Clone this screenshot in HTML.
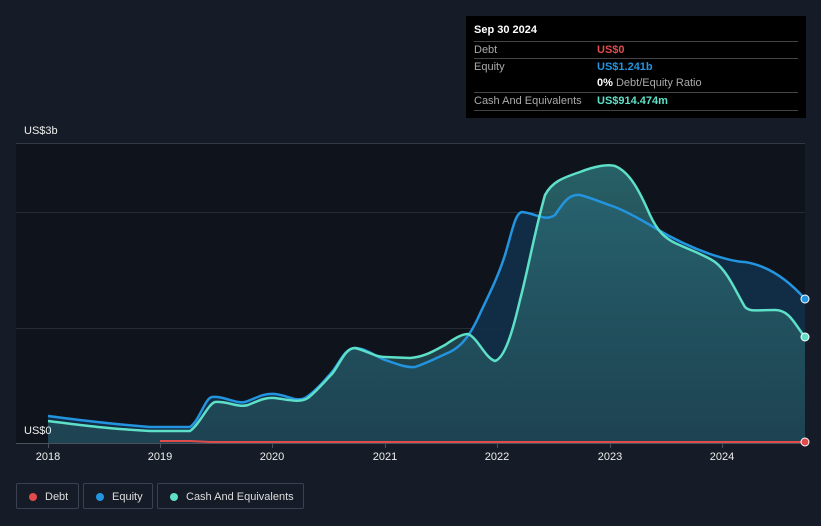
<!DOCTYPE html>
<html><head><style>
body{margin:0;width:821px;height:526px;background:#161c27;font-family:"Liberation Sans",sans-serif;overflow:hidden;position:relative}
.tip{position:absolute;left:466px;top:16px;width:340px;height:102px;background:#000;color:#fff;font-size:11px}
.row{position:absolute;left:8px;width:324px;border-top:1px solid #444;height:17px;line-height:17px}
.row span{position:absolute;left:123px;font-weight:bold}
.lab{color:#aaa}
.leg{position:absolute;top:483px;height:26px;border:1px solid #3a4150;border-radius:2px;color:#ddd;font-size:11px;line-height:26px;box-sizing:border-box;white-space:nowrap}
.leg i{position:absolute;left:12px;top:9px;width:8px;height:8px;border-radius:50%}
.yr{position:absolute;top:451px;color:#eee;font-size:11px;transform:translateX(-50%)}
</style></head><body>
<svg width="821" height="526" style="position:absolute;left:0;top:0">
<defs><linearGradient id="g" x1="0" y1="0" x2="0" y2="1"><stop offset="0" stop-color="#2f7a80" stop-opacity=".75"/><stop offset="1" stop-color="#2a5a60" stop-opacity=".5"/></linearGradient></defs>
<rect x="16" y="143" width="789" height="300" fill="#0f131b"/>
<line x1="16" y1="143.5" x2="805" y2="143.5" stroke="#333a44"/>
<line x1="16" y1="212.5" x2="805" y2="212.5" stroke="#262c36"/>
<line x1="16" y1="328.5" x2="805" y2="328.5" stroke="#262c36"/>
<path d="M48,416 C80,420 100,423 150,427 L190,427 C200,420 205,398 212,397 C225,396 235,404 245,402 C255,399 262,393 275,394 C290,396 295,402 305,398 C315,392 325,380 332,372 C340,362 345,348 355,348 C365,348 375,356 385,360 C395,363 405,368 415,367 C430,362 440,356 450,352 C462,346 470,335 478,318 C487,298 497,280 505,255 C512,232 515,213 522,212 C535,213 545,222 555,215 C565,200 570,194 580,195 C592,198 600,202 615,207 C625,211 640,219 655,228 C670,237 690,247 710,254 C722,258 735,262 745,262 C770,266 790,282 805,299 L805,443 L48,443Z" fill="#12304a" fill-opacity=".9"/>
<path d="M48,421 C80,425 100,428 150,431 L190,431 C200,424 208,404 215,402 C228,401 238,408 248,405 C258,401 265,397 275,398 C290,400 300,403 308,398 C318,390 325,381 332,374 C340,364 345,348 355,348 C365,350 375,357 385,357 L410,358 C425,357 435,350 445,345 C455,338 462,334 468,334 C478,338 485,358 495,361 C505,358 513,330 520,300 C528,270 535,230 545,195 C552,182 562,178 580,172 C595,166 608,164 615,166 C630,172 640,192 650,215 C658,232 665,238 675,243 C690,250 705,255 715,262 C728,272 735,290 745,307 C750,312 755,310 775,310 C790,310 795,325 805,337 L805,443 L48,443Z" fill="url(#g)"/>
<path d="M48,416 C80,420 100,423 150,427 L190,427 C200,420 205,398 212,397 C225,396 235,404 245,402 C255,399 262,393 275,394 C290,396 295,402 305,398 C315,392 325,380 332,372 C340,362 345,348 355,348 C365,348 375,356 385,360 C395,363 405,368 415,367 C430,362 440,356 450,352 C462,346 470,335 478,318 C487,298 497,280 505,255 C512,232 515,213 522,212 C535,213 545,222 555,215 C565,200 570,194 580,195 C592,198 600,202 615,207 C625,211 640,219 655,228 C670,237 690,247 710,254 C722,258 735,262 745,262 C770,266 790,282 805,299" fill="none" stroke="#2394df" stroke-width="2.5"/>
<path d="M48,421 C80,425 100,428 150,431 L190,431 C200,424 208,404 215,402 C228,401 238,408 248,405 C258,401 265,397 275,398 C290,400 300,403 308,398 C318,390 325,381 332,374 C340,364 345,348 355,348 C365,350 375,357 385,357 L410,358 C425,357 435,350 445,345 C455,338 462,334 468,334 C478,338 485,358 495,361 C505,358 513,330 520,300 C528,270 535,230 545,195 C552,182 562,178 580,172 C595,166 608,164 615,166 C630,172 640,192 650,215 C658,232 665,238 675,243 C690,250 705,255 715,262 C728,272 735,290 745,307 C750,312 755,310 775,310 C790,310 795,325 805,337" fill="none" stroke="#5ee0c8" stroke-width="2.5"/>
<line x1="16" y1="443.5" x2="805" y2="443.5" stroke="#4a515c"/>
<path d="M160,441 L190,441 L210,442 L805,442" stroke="#e04b4b" stroke-width="2" fill="none"/>
<g stroke="#4a515c"><line x1="48.5" y1="443" x2="48.5" y2="448"/><line x1="160.5" y1="443" x2="160.5" y2="448"/><line x1="272.5" y1="443" x2="272.5" y2="448"/><line x1="385.5" y1="443" x2="385.5" y2="448"/><line x1="497.5" y1="443" x2="497.5" y2="448"/><line x1="610.5" y1="443" x2="610.5" y2="448"/><line x1="722.5" y1="443" x2="722.5" y2="448"/></g>
<circle cx="805" cy="299" r="4" fill="#2394df" stroke="#fff" stroke-width="1"/>
<circle cx="805" cy="337" r="4" fill="#5ee0c8" stroke="#fff" stroke-width="1"/>
<circle cx="805" cy="442" r="4" fill="#e04b4b" stroke="#fff" stroke-width="1"/>
</svg>
<div style="position:absolute;left:24px;top:125px;color:#eee;font-size:11px">US$3b</div>
<div style="position:absolute;left:24px;top:425px;color:#eee;font-size:11px">US$0</div>
<div class="yr" style="left:48px">2018</div><div class="yr" style="left:160px">2019</div><div class="yr" style="left:272px">2020</div><div class="yr" style="left:385px">2021</div><div class="yr" style="left:497px">2022</div><div class="yr" style="left:610px">2023</div><div class="yr" style="left:722px">2024</div>
<div class="tip">
<div style="position:absolute;left:8px;top:8px;font-weight:bold">Sep 30 2024</div>
<div class="row" style="top:25px"><b class="lab" style="font-weight:normal">Debt</b><span style="color:#e04b4b">US$0</span></div>
<div class="row" style="top:42px"><b class="lab" style="font-weight:normal">Equity</b><span style="color:#2394df">US$1.241b</span></div>
<div class="row" style="top:59px;border-top:none"><span>0% <b style="font-weight:normal;color:#aaa">Debt/Equity Ratio</b></span></div>
<div class="row" style="top:76px;border-bottom:1px solid #444"><b class="lab" style="font-weight:normal">Cash And Equivalents</b><span style="color:#5ee0c8">US$914.474m</span></div>
</div>
<div class="leg" style="left:16px;width:63px"><i style="background:#e04b4b"></i><span style="position:absolute;left:28px">Debt</span></div>
<div class="leg" style="left:83px;width:70px"><i style="background:#2394df"></i><span style="position:absolute;left:28px">Equity</span></div>
<div class="leg" style="left:157px;width:147px"><i style="background:#5ee0c8"></i><span style="position:absolute;left:28px">Cash And Equivalents</span></div>
</body></html>
